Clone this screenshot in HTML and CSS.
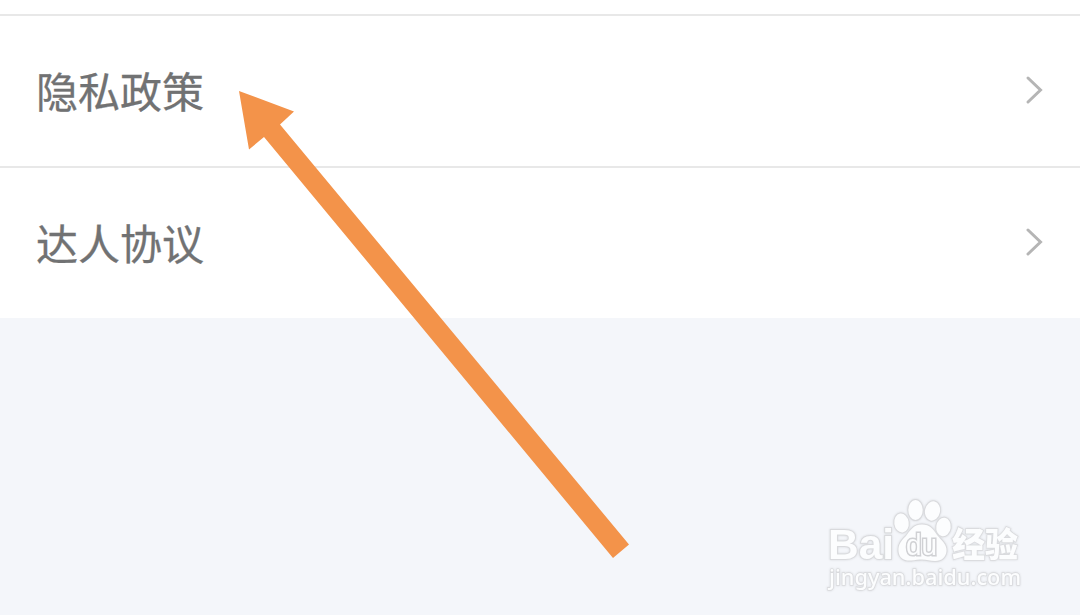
FILE: index.html
```html
<!DOCTYPE html>
<html lang="zh-CN">
<head>
  <meta charset="UTF-8">
  <meta name="viewport" content="width=device-width, initial-scale=1.0">
  <title>隐私政策</title>
  <link rel="stylesheet" href="styles.css">
</head>
<body>
  <main class="page">
    <div class="list">
      <div class="row">
        <span class="label">隐私政策</span>
        <svg class="chevron" viewBox="0 0 18 30"><path d="M3 3 L15.5 15 L3 27"/></svg>
      </div>
      <div class="row">
        <span class="label">达人协议</span>
        <svg class="chevron" viewBox="0 0 18 30"><path d="M3 3 L15.5 15 L3 27"/></svg>
      </div>
    </div>

    <!-- 箭头 -->
    <svg class="arrow" viewBox="0 0 392 468">
      <polygon points="1,1 56,21.5 42,34.5 391,454.5 375,468 26,47 11,59.5"/>
    </svg>

    <!-- 水印 -->
    <svg class="watermark" viewBox="0 0 210 110">
      <text class="brand" x="8" y="69" textLength="66" lengthAdjust="spacingAndGlyphs">Bai</text>
      <g class="paw">
        <ellipse cx="81.5" cy="33" rx="7.2" ry="9.5" transform="rotate(-8 81.5 33)"/>
        <ellipse cx="95.5" cy="20" rx="7.2" ry="10"/>
        <ellipse cx="112.5" cy="21" rx="7.5" ry="9.7" transform="rotate(12 112.5 21)"/>
        <ellipse cx="123.5" cy="37" rx="7.2" ry="9.3" transform="rotate(8 123.5 37)"/>
        <path d="M102 34.5 C93 34.5 90 41 86 46 C82 50 78 54 78.5 61 C79 68 84 71 91 70.5 C96 70 98 69.5 102 69.5 C107 69.5 110 71 115 71 C122 71 126 67 126.5 61 C127 54 121 50 117 45 C113 39 110 34.5 102 34.5 Z"/>
      </g>
      <text class="du" x="86" y="64.5" textLength="31" lengthAdjust="spacingAndGlyphs">du</text>
      <text class="cn" x="132" y="67" textLength="66" lengthAdjust="spacingAndGlyphs">经验</text>
      <text class="site" x="9" y="95" textLength="192" lengthAdjust="spacingAndGlyphs">jingyan.baidu.com</text>
    </svg>
  </main>
</body>
</html>
```
FILE: styles.css
```css
body {
  margin: 0;
  background: #f4f6fa;
  font-family: "Noto Sans CJK SC", sans-serif;
  overflow: hidden;
}
.page {
  position: relative;
  height: 615px;
}
.list {
  background: #fff;
  padding-top: 14px;
}
.row {
  display: flex;
  align-items: center;
  justify-content: space-between;
  box-sizing: border-box;
  height: 152px;
  padding: 0 37px 0 36px;
  border-top: 2px solid #e8e8e8;
}
.label {
  color: #717273;
  font-size: 42px;
  line-height: 60px;
  margin-bottom: 2px;
  -webkit-text-stroke: 0.3px #717273;
}
.chevron {
  width: 18px;
  height: 30px;
  margin-bottom: 2px;
  fill: none;
  stroke: #b5b5b5;
  stroke-width: 3;
  stroke-linecap: round;
}
.arrow {
  position: absolute;
  left: 238px;
  top: 90px;
  width: 392px;
  height: 468px;
  fill: #f3934a;
}

/* 水印 */
.watermark {
  position: absolute;
  left: 820px;
  top: 490px;
  width: 210px;
  height: 110px;
  overflow: visible;
  fill: #fcfdfe;
  stroke: #d9dadd;
  stroke-width: 1.5;
  paint-order: stroke;
  filter: drop-shadow(0 0 1px rgba(0, 0, 0, 0.12));
}
.brand {
  font: bold 43px "Liberation Sans", sans-serif;
  stroke-width: 2;
}
.paw {
  stroke-width: 2;
}
.du {
  font: 29px "Liberation Sans", sans-serif;
  stroke: #d0d1d4;
  stroke-width: 3;
}
.cn {
  font: 900 34px "Noto Sans CJK SC", sans-serif;
}
.site {
  font: 500 22px "Noto Sans", sans-serif;
}
```
